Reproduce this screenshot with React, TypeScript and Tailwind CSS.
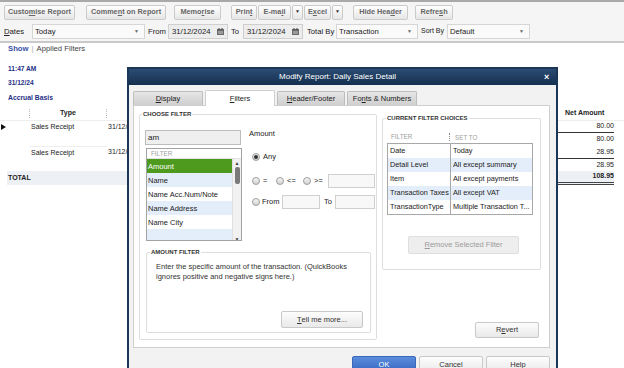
import React from 'react';

function U({ children }: { children: React.ReactNode }) {
  return <span className="underline underline-offset-1">{children}</span>;
}

function ToolButton({ className, children }: { className: string; children: React.ReactNode }) {
  return (
    <div
      className={`${className} h-[15px] flex items-center justify-center rounded-[2px] border border-[#cbcbcb] bg-gradient-to-b from-white to-[#e6e6e6] text-[7.3px] font-bold text-[#666]`}
    >
      {children}
    </div>
  );
}

function SelectBox({ className, value }: { className: string; value: string }) {
  return (
    <div
      className={`${className} h-[15px] flex items-center justify-between border border-[#d6d6d6] bg-[#fafafa] pl-[2px] pr-[5px] text-[7.7px] text-[#222]`}
    >
      <span>{value}</span>
      <span className="text-[5px] text-[#666]">▼</span>
    </div>
  );
}

function DateBox({ className, value }: { className: string; value: string }) {
  return (
    <div
      className={`${className} h-[15px] flex items-center justify-between border border-[#cfcfcf] bg-[#ededed] pl-[3px] pr-[3px] text-[7.7px] text-[#222]`}
    >
      <span>{value}</span>
      <svg width="7" height="7" viewBox="0 0 7 7">
        <rect x="0" y="1" width="7" height="6" fill="#6b6b6b" />
        <rect x="1" y="3" width="5" height="3" fill="#9a9a9a" />
        <rect x="1.5" y="0" width="1" height="2" fill="#444" />
        <rect x="4.5" y="0" width="1" height="2" fill="#444" />
      </svg>
    </div>
  );
}

function Radio({ checked = false }: { checked?: boolean }) {
  return (
    <div className="shrink-0 w-[8px] h-[8px] rounded-full border border-[#9d9d9d] bg-gradient-to-b from-[#f6f6f6] to-[#d2d2d2] flex items-center justify-center">
      {checked && <div className="w-[4px] h-[4px] rounded-full bg-[#333]" />}
    </div>
  );
}

function DlgButton({ className, children }: { className: string; children: React.ReactNode }) {
  return (
    <div
      className={`${className} flex items-center justify-center rounded-[2px] border border-[#c9c9c9] bg-gradient-to-b from-[#fdfdfd] to-[#e9e9e9] text-[7.5px] text-[#333]`}
    >
      {children}
    </div>
  );
}

const filterItems = [
  { label: 'Amount', bg: 'bg-[#4e9a1f] text-white' },
  { label: 'Name', bg: 'bg-[#e4eefa]' },
  { label: 'Name Acc.Num/Note', bg: 'bg-white' },
  { label: 'Name Address', bg: 'bg-[#e4eefa]' },
  { label: 'Name City', bg: 'bg-white' },
];

const currentFilters = [
  { filter: 'Date', setTo: 'Today', bg: 'bg-white' },
  { filter: 'Detail Level', setTo: 'All except summary', bg: 'bg-[#e4eefa]' },
  { filter: 'Item', setTo: 'All except payments', bg: 'bg-white' },
  { filter: 'Transaction Taxes', setTo: 'All except VAT', bg: 'bg-[#e4eefa]' },
  { filter: 'TransactionType', setTo: 'Multiple Transaction T...', bg: 'bg-white' },
];

function Toolbar() {
  return (
    <div className="border-t-2 border-[#a9a9a9] bg-[#f5f5f5] border-b-2 border-b-[#c9c9c9]">
      <div className="flex items-center h-[20px] pl-[4px]">
        <ToolButton className="w-[71px]">
          Custo<U>m</U>ise Report
        </ToolButton>
        <ToolButton className="w-[80px] ml-[11px]">
          Comme<U>n</U>t on Report
        </ToolButton>
        <ToolButton className="w-[47px] ml-[8px]">
          Memo<U>r</U>ise
        </ToolButton>
        <ToolButton className="w-[26px] ml-[10px]">
          Prin<U>t</U>
        </ToolButton>
        <ToolButton className="w-[33px] ml-[1px]">
          E-ma<U>i</U>l
        </ToolButton>
        <ToolButton className="w-[11px] ml-[1px]">
          <span className="text-[5px] text-[#333]">▼</span>
        </ToolButton>
        <ToolButton className="w-[27px] ml-[1px]">
          E<U>x</U>cel
        </ToolButton>
        <ToolButton className="w-[11px] ml-[1px]">
          <span className="text-[5px] text-[#333]">▼</span>
        </ToolButton>
        <ToolButton className="w-[55px] ml-[10px]">
          Hide Hea<U>d</U>er
        </ToolButton>
        <ToolButton className="w-[38px] ml-[7px]">
          Refre<U>s</U>h
        </ToolButton>
      </div>
      <div className="flex items-center h-[19px] pl-[4px] text-[7.7px] text-[#222]">
        <span className="w-[28px]">
          <U>D</U>ates
        </span>
        <SelectBox className="w-[113px]" value="Today" />
        <span className="ml-[3px] w-[20px]">From</span>
        <DateBox className="w-[60px]" value="31/12/2024" />
        <span className="ml-[3px] w-[12px]">To</span>
        <DateBox className="w-[60px]" value="31/12/2024" />
        <span className="ml-[4px] w-[29px]">Total By</span>
        <SelectBox className="w-[82px]" value="Transaction" />
        <span className="ml-[3px] w-[26px] text-[7px]">Sort By</span>
        <SelectBox className="w-[83px]" value="Default" />
      </div>
    </div>
  );
}

function Report() {
  return (
    <div className="text-[7px] text-[#222]">
      <div className="h-[12px] flex items-center pl-[8px] text-[7.7px]">
        <span className="text-[#3651a6] font-bold">Show</span>
        <span className="mx-[3px] text-[#aaa]">|</span>
        <span className="text-[#444]">Applied Filters</span>
      </div>
      <div className="mt-[9px] h-[9px] leading-[9px] pl-[8px] font-bold text-[#1f2f86] text-[6.6px]">11:47 AM</div>
      <div className="mt-[5px] h-[9px] leading-[9px] pl-[8px] font-bold text-[#1f2f86] text-[6.6px]">31/12/24</div>
      <div className="mt-[6px] h-[9px] leading-[9px] pl-[8px] font-bold text-[#1f2f86] text-[6.8px]">Accrual Basis</div>

      <div className="mt-[5px] flex h-[13px] font-bold">
        <div className="w-[7px]" />
        <div className="w-[23px] border-r border-dotted border-[#bbb] my-[2px]" />
        <div className="w-[77px] flex items-center justify-center border-r border-dotted border-[#bbb] my-[2px]">
          Type
        </div>
        <div className="flex-1" />
        <div className="w-[57px] flex items-center pl-[8px]">Net Amount</div>
        <div className="w-[10px]" />
      </div>

      <div className="flex h-[13px] border-t border-[#eeeeee]">
        <div className="w-[7px] flex items-center">
          <svg width="5" height="6" viewBox="0 0 5 6" className="ml-[1px]">
            <polygon points="0,0 5,3 0,6" fill="#111" />
          </svg>
        </div>
        <div className="w-[23px]" />
        <div className="w-[77px] flex items-center pl-[1px]">Sales Receipt</div>
        <div className="flex-1 flex items-center pl-[1px]">31/12/2024</div>
        <div className="w-[57px] flex items-center justify-end border-b border-[#333]">80.00</div>
        <div className="w-[10px]" />
      </div>
      <div className="flex h-[13px]">
        <div className="w-[107px]" />
        <div className="flex-1" />
        <div className="w-[57px] flex items-center justify-end">80.00</div>
        <div className="w-[10px]" />
      </div>
      <div className="flex h-[13px]">
        <div className="w-[30px]" />
        <div className="w-[77px] flex items-center pl-[1px] border-t border-[#eeeeee]">Sales Receipt</div>
        <div className="flex-1 flex items-center pl-[1px]">31/12/2024</div>
        <div className="w-[57px] flex items-center justify-end border-b border-[#333]">28.95</div>
        <div className="w-[10px]" />
      </div>
      <div className="flex h-[12px]">
        <div className="w-[107px]" />
        <div className="flex-1" />
        <div className="w-[57px] flex items-center justify-end">28.95</div>
        <div className="w-[10px]" />
      </div>
      <div className="flex h-[14px] font-bold">
        <div className="w-[7px]" />
        <div className="flex-1 flex items-center pl-[1px] bg-[#edf1f6]">TOTAL</div>
        <div className="w-[57px] flex items-center justify-end bg-[#edf1f6] border-b-[3px] border-double border-[#444]">
          108.95
        </div>
        <div className="w-[10px]" />
      </div>
    </div>
  );
}

function ModifyDialog() {
  return (
    <div className="absolute left-[127px] top-[67px] w-[431px] h-[320px] border-2 border-[#1b3656] bg-[#f2f2f2] text-[#222]">
      <div className="h-[16px] flex items-center justify-between bg-gradient-to-b from-[#2c4c74] to-[#15304f] text-white">
        <div className="w-[2px]" />
        <span className="text-[8px]">Modify Report: Daily Sales Detail</span>
        <span className="w-[12px] text-[9px] font-bold leading-none">×</span>
      </div>

      <div className="flex items-end h-[21px] pl-[4px] gap-[2px] text-[7.5px]">
        <div className="w-[70px] h-[14px] mb-[1px] flex items-center justify-center rounded-t-[2px] border border-b-0 border-[#bdbdbd] bg-gradient-to-b from-[#e6e6e6] to-[#cfcfcf]">
          <U>D</U>isplay
        </div>
        <div className="relative z-10 w-[70px] h-[16px] flex items-center justify-center rounded-t-[2px] border border-b-0 border-[#cfcfcf] bg-white">
          <U>F</U>ilters
        </div>
        <div className="w-[68px] h-[14px] mb-[1px] flex items-center justify-center rounded-t-[2px] border border-b-0 border-[#bdbdbd] bg-gradient-to-b from-[#e6e6e6] to-[#cfcfcf]">
          <U>H</U>eader/Footer
        </div>
        <div className="w-[70px] h-[14px] mb-[1px] flex items-center justify-center rounded-t-[2px] border border-b-0 border-[#bdbdbd] bg-gradient-to-b from-[#e6e6e6] to-[#cfcfcf]">
          Fo<U>n</U>ts &amp; Numbers
        </div>
      </div>

      <div className="-mt-px ml-[4px] w-[417px] h-[243px] border border-[#cfcfcf] bg-white flex">
        <fieldset className="ml-[5px] mt-[5px] w-[238px] h-[229px] border border-[#dedede] rounded-[2px]">
          <legend className="ml-[2px] px-[1px] text-[6px] leading-[7px] font-bold text-[#333]">CHOOSE FILTER</legend>
          <div className="pl-[5px] flex flex-col">
            <div className="flex">
              <div className="w-[97px]">
                <div className="mt-[12px] w-[96px] h-[15px] flex items-center pl-[2px] border border-[#bdbdbd] bg-[#efefef] text-[8px]">
                  am
                </div>
                <div className="mt-[3px] ml-[1px] w-[96px] h-[93px] border border-[#a3a3a3] bg-white flex flex-col overflow-hidden">
                  <div className="h-[12px] flex items-center pl-[4px] text-[6.3px] text-[#a0a0a0] border-b border-[#e2e2e2]">
                    FILTER
                  </div>
                  <div className="flex flex-1">
                    <div className="flex-1 text-[7.5px]">
                      {filterItems.map((it) => (
                        <div key={it.label} className={`h-[14px] flex items-center pl-[1px] whitespace-nowrap ${it.bg}`}>
                          {it.label}
                        </div>
                      ))}
                      <div className="h-[14px] bg-[#e4eefa]" />
                    </div>
                    <div className="w-[9px] bg-[#f1f1f1] border-l border-[#e0e0e0] flex flex-col items-center">
                      <span className="text-[5px] leading-[8px] text-[#444]">▲</span>
                      <div className="w-[5px] h-[17px] rounded-[2px] bg-[#7a7a7a]" />
                      <div className="flex-1" />
                      <span className="text-[5px] leading-[8px] text-[#444]">▼</span>
                    </div>
                  </div>
                </div>
              </div>

              <div className="ml-[7px] flex-1 text-[7.5px]">
                <div className="mt-[11px] h-[10px] leading-[10px]">Amount</div>
                <div className="mt-[13px] h-[10px] flex items-center pl-[3px]">
                  <Radio checked />
                  <span className="ml-[3px]">Any</span>
                </div>
                <div className="mt-[12px] h-[14px] flex items-center pl-[3px]">
                  <Radio />
                  <span className="ml-[3px] w-[13px]">=</span>
                  <Radio />
                  <span className="ml-[3px] w-[16px]">&lt;=</span>
                  <Radio />
                  <span className="ml-[3px] w-[14px]">&gt;=</span>
                  <div className="w-[47px] h-[14px] border border-[#d0d0d0] bg-[#f8f8f8]" />
                </div>
                <div className="mt-[7px] h-[14px] flex items-center pl-[3px]">
                  <Radio />
                  <span className="ml-[2px] w-[20px]">From</span>
                  <div className="w-[38px] h-[14px] border border-[#d0d0d0] bg-[#f8f8f8]" />
                  <span className="ml-[4px] w-[11px]">To</span>
                  <div className="w-[40px] h-[14px] border border-[#d0d0d0] bg-[#f8f8f8]" />
                </div>
              </div>
            </div>

            <fieldset className="ml-[1px] mt-[8px] w-[225px] h-[84px] border border-[#dedede] rounded-[2px]">
              <legend className="ml-[3px] px-[1px] text-[6px] leading-[7px] font-bold text-[#333]">AMOUNT FILTER</legend>
              <div className="h-[76px] flex flex-col">
                <p className="pl-[9px] pt-[6px] text-[7.5px] leading-[10px] text-[#333]">
                  Enter the specific amount of the transaction. (QuickBooks
                  <br />
                  ignores positive and negative signs here.)
                </p>
                <DlgButton className="mt-auto self-end mr-[7px] mb-[4px] w-[82px] h-[17px]">
                  <U>T</U>ell me more...
                </DlgButton>
              </div>
            </fieldset>
          </div>
        </fieldset>

        <div className="ml-[5px] w-[167px] flex flex-col">
          <fieldset className="mt-[9px] w-[159px] h-[155px] border border-[#dedede] rounded-[2px]">
            <legend className="ml-[3px] px-[1px] text-[6px] leading-[7px] font-bold text-[#333]">
              CURRENT FILTER CHOICES
            </legend>
            <div className="ml-[4px] mt-[9px] w-[146px] h-[12px] flex items-center text-[6.3px] text-[#a0a0a0]">
              <span className="w-[62px] pl-[4px]">FILTER</span>
              <span className="h-[8px] border-l border-dotted border-[#888] pl-[5px]">SET TO</span>
            </div>
            <div className="ml-[4px] w-[146px] h-[72px] border border-[#a8a8a8] text-[7.3px]">
              {currentFilters.map((r) => (
                <div key={r.filter} className={`h-[14px] flex items-center ${r.bg}`}>
                  <div className="w-[63px] h-full flex items-center pl-[2px] border-r border-[#a8a8a8] whitespace-nowrap overflow-hidden">
                    {r.filter}
                  </div>
                  <div className="flex-1 pl-[2px] whitespace-nowrap overflow-hidden">{r.setTo}</div>
                </div>
              ))}
            </div>
            <div className="ml-[25px] mt-[21px] w-[111px] h-[18px] flex items-center justify-center rounded-[2px] border border-[#dedede] bg-[#eeeeee] text-[7.5px] text-[#9c9c9c]">
              <U>R</U>emove Selected Filter
            </div>
          </fieldset>
          <DlgButton className="mt-auto self-end mr-[10px] mb-[9px] w-[64px] h-[16px]">
            R<U>e</U>vert
          </DlgButton>
        </div>
      </div>

      <div className="mt-[8px] flex justify-end gap-[3px] pr-[6px]">
        <div className="w-[64px] h-[17px] flex items-center justify-center rounded-[2px] border border-[#3a67b8] bg-gradient-to-b from-[#5b8ddc] to-[#3566c1] text-[7.5px] text-white">
          OK
        </div>
        <DlgButton className="w-[64px] h-[17px]">Cancel</DlgButton>
        <DlgButton className="w-[64px] h-[17px]">Help</DlgButton>
      </div>
    </div>
  );
}

export default function App() {
  return (
    <div className="relative w-[624px] h-[368px] overflow-hidden bg-white font-['Liberation_Sans',Arial,sans-serif]">
      <Toolbar />
      <Report />
      <ModifyDialog />
    </div>
  );
}
